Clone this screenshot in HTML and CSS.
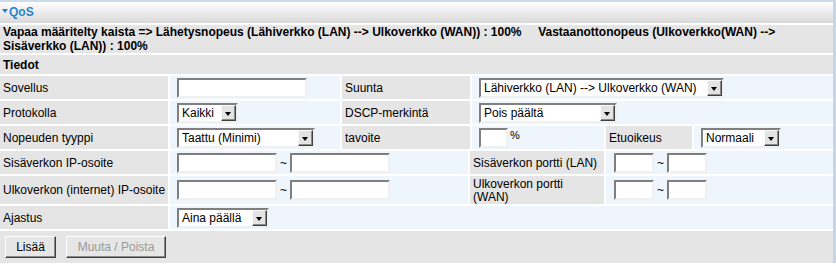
FILE: index.html
```html
<!DOCTYPE html>
<html lang="fi">
<head>
<meta charset="utf-8">
<title>QoS</title>
<link rel="stylesheet" href="styles.css">
</head>
<body>
<div class="panel">
  <div class="hdr"><span class="tri"></span>QoS</div>
  <div class="rows">
    <div class="row info g">Vapaa määritelty kaista =&gt; Lähetysnopeus (Lähiverkko (LAN) --&gt; Ulkoverkko (WAN)) : 100%&nbsp;&nbsp;&nbsp;&nbsp; Vastaanottonopeus (Ulkoverkko(WAN) --&gt; Sisäverkko (LAN)) : 100%</div>
    <div class="row sub g">Tiedot</div>

    <div class="row">
      <div class="c g w-lab">Sovellus</div>
      <div class="c b w-v1"><input class="txt t-app" type="text"></div>
      <div class="c g w-l2">Suunta</div>
      <div class="c b grow pv">
        <div class="sel s-dir"><select><option>Lähiverkko (LAN) --&gt; Ulkoverkko (WAN)</option></select><span class="arr"></span></div>
      </div>
    </div>

    <div class="row">
      <div class="c g w-lab">Protokolla</div>
      <div class="c b w-v1"><div class="sel s-proto"><select><option>Kaikki</option></select><span class="arr"></span></div></div>
      <div class="c g w-l2">DSCP-merkintä</div>
      <div class="c b grow pv">
        <div class="sel s-dscp"><select><option>Pois päältä</option></select><span class="arr"></span></div>
      </div>
    </div>

    <div class="row">
      <div class="c g w-lab">Nopeuden tyyppi</div>
      <div class="c b w-v1"><div class="sel s-type"><select><option>Taattu (Minimi)</option></select><span class="arr"></span></div></div>
      <div class="c g w-l2">tavoite</div>
      <div class="c b w-pct pv"><input class="txt t-pct" type="text"><span class="pct">%</span></div>
      <div class="c g w-etu">Etuoikeus</div>
      <div class="c b grow pv">
        <div class="sel s-prio"><select><option>Normaali</option></select><span class="arr"></span></div>
      </div>
    </div>

    <div class="row">
      <div class="c g w-lab">Sisäverkon IP-osoite</div>
      <div class="c b w-ip"><input class="txt t-ip" type="text"><span class="tilde">~</span><input class="txt t-ip" type="text"></div>
      <div class="c g w-pl">Sisäverkon portti (LAN)</div>
      <div class="c b grow pp"><input class="txt t-port" type="text"><span class="tilde">~</span><input class="txt t-port" type="text"></div>
    </div>

    <div class="row tall">
      <div class="c g w-lab nw">Ulkoverkon (internet) IP-osoite</div>
      <div class="c b w-ip"><input class="txt t-ip" type="text"><span class="tilde">~</span><input class="txt t-ip" type="text"></div>
      <div class="c g w-pl wrap">Ulkoverkon portti (WAN)</div>
      <div class="c b grow pp"><input class="txt t-port" type="text"><span class="tilde">~</span><input class="txt t-port" type="text"></div>
    </div>

    <div class="row">
      <div class="c g w-lab">Ajastus</div>
      <div class="c b grow"><div class="sel s-sched"><select><option>Aina päällä</option></select><span class="arr"></span></div></div>
    </div>

    <div class="row btns g">
      <button class="btn b-add" type="button">Lisää</button>
      <button class="btn b-mod" type="button" disabled>Muuta / Poista</button>
    </div>
  </div>
</div>
</body>
</html>
```
FILE: styles.css
```css
body {
  margin: 0;
  background: #fff;
  color: #000;
  font-family: "Liberation Sans", Arial, sans-serif;
  font-size: 12px;
}

.panel {
  width: 836px;
  box-sizing: border-box;
  border-right: 3px solid #c4d5e6;
}

.hdr {
  height: 23px;
  box-sizing: border-box;
  border-top: 2px solid #cbdbea;
  background: linear-gradient(#fefefe, #d9d9d9);
  display: flex;
  align-items: center;
  padding: 0 0 1px 2px;
  color: #1f85cf;
  font-weight: bold;
  font-size: 12px;
}

.tri {
  width: 0;
  height: 0;
  border-left: 3.5px solid transparent;
  border-right: 3.5px solid transparent;
  border-top: 4px solid #1f85cf;
  margin-right: 1px;
  margin-top: -3px;
}

.rows {
  display: flex;
  flex-direction: column;
  gap: 2px;
  margin-top: 2px;
}

.g { background: #e5e5e5; }
.b { background: #eef5fd; }

.row {
  display: flex;
  gap: 2px;
  height: 23px;
}

.row.tall { height: 28px; }

.info {
  display: block;
  height: 28px;
  box-sizing: border-box;
  padding: 1px 3px 0;
  line-height: 13.5px;
  font-weight: bold;
}

.sub {
  height: 19px;
  align-items: center;
  padding: 0 3px;
  font-weight: bold;
  box-sizing: border-box;
}

.c {
  display: flex;
  align-items: center;
  box-sizing: border-box;
  padding: 0 3px;
}

.w-lab { width: 168px; flex: none; }
.w-v1 { width: 170px; flex: none; padding-left: 7px; }
.w-l2 { width: 128px; flex: none; }
.w-pct { width: 132px; flex: none; }
.w-etu { width: 86px; flex: none; }
.w-ip { width: 298px; flex: none; padding-left: 7px; }
.w-pl { width: 134px; flex: none; }
.grow { flex: 1; padding-left: 7px; }
.pv { padding-left: 7px; }
.pp { padding-left: 8px; }
.nw { white-space: nowrap; }
.wrap { line-height: 13px; padding-top: 1px; }

.txt {
  height: 20px;
  box-sizing: border-box;
  margin: 0;
  padding: 0 2px;
  border: 2px solid;
  border-color: #7f7f7f #f0f0f0 #f0f0f0 #7f7f7f;
  background: #fff;
  font: inherit;
  outline: none;
}

.t-app { width: 130px; }
.t-pct { width: 29px; }
.t-ip { width: 100px; }
.t-port { width: 40px; }

.tilde {
  width: 13px;
  text-align: center;
  flex: none;
}

.pct {
  font-size: 11px;
  margin-left: 2px;
  align-self: flex-start;
  margin-top: 3px;
}

.sel {
  position: relative;
  height: 20px;
  box-sizing: border-box;
  border: 2px solid;
  border-color: #7f7f7f #f0f0f0 #f0f0f0 #7f7f7f;
  background: #fff;
  flex: none;
}

.sel select {
  appearance: none;
  -webkit-appearance: none;
  display: block;
  width: 100%;
  height: 100%;
  margin: 0;
  padding: 0 0 0 3px;
  border: 0;
  background: transparent;
  color: #000;
  font: inherit;
  outline: none;
}

.arr {
  position: absolute;
  right: 0;
  top: 0;
  bottom: 0;
  width: 15px;
  box-sizing: border-box;
  background: #e3e3e3;
  border: 1px solid;
  border-color: #fafafa #404040 #404040 #fafafa;
  box-shadow: inset -1px -1px 0 #8a8a8a;
  pointer-events: none;
}

.arr::after {
  content: "";
  position: absolute;
  left: 3px;
  top: 6px;
  border-left: 3.5px solid transparent;
  border-right: 3.5px solid transparent;
  border-top: 4px solid #000;
}

.s-dir { width: 245px; }
.s-proto { width: 61px; }
.s-type { width: 138px; }
.s-dscp { width: 138px; }
.s-prio { width: 80px; }
.s-sched { width: 92px; }

.btns {
  height: 32px;
  align-items: center;
  padding-left: 5px;
  gap: 10px;
  box-sizing: border-box;
}

.btn {
  height: 22px;
  box-sizing: border-box;
  margin: 0;
  padding: 0;
  border: 1px solid;
  border-color: #fff #404040 #404040 #fff;
  box-shadow: inset -1px -1px 0 #8a8a8a;
  background: #e6e6e6;
  color: #000;
  font: inherit;
}

.b-add { width: 51px; }
.b-mod { width: 100px; color: #9a9a9a; }
```
